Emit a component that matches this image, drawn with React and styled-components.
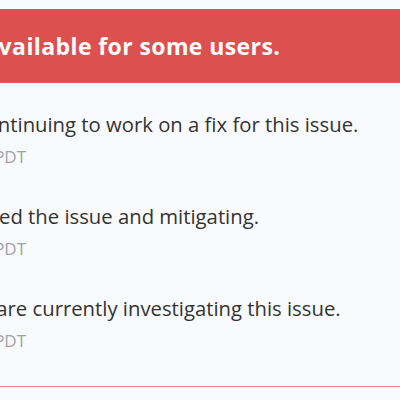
import React from 'react';
import styled, { createGlobalStyle } from 'styled-components';

const GlobalStyle = createGlobalStyle`
  html, body {
    margin: 0;
    background: #f9fafb;
  }
  body {
    font-family: "Open Sans", "Noto Sans", sans-serif;
    overflow: hidden;
  }
`;

const updates = [
  {
    label: 'Update',
    body: 'Team is continuing to work on a fix for this issue.',
    time: 'Jun 4, 10:22 PDT',
  },
  {
    label: 'Identified',
    body: 'We identified the issue and mitigating.',
    time: 'Jun 4, 09:41 PDT',
  },
  {
    label: 'Investigating',
    body: 'Engineers are currently investigating this issue.',
    time: 'Jun 4, 09:05 PDT',
  },
];

const IncidentPage = () => {
  return (
    <Wrapper>
      <GlobalStyle />
      <Card>
        <Header>
          <h2>API service is unavailable for some users.</h2>
        </Header>
        <UpdateList>
          {updates.map((update, index) => {
            const { label, body, time } = update;
            return (
              <UpdateRow key={index}>
                <Label>{label}</Label>
                <div>
                  <Body>{body}</Body>
                  <Time>{time}</Time>
                </div>
              </UpdateRow>
            );
          })}
        </UpdateList>
      </Card>
    </Wrapper>
  );
};
export default IncidentPage;

// the page is scrolled: the left part of the card lies off screen
const Wrapper = styled.div`
  width: 720px;
  margin-left: -252px;
  padding-top: 9px;
`;

const Card = styled.div`
  border-bottom: 1px solid #dd8a8a;
`;

const Header = styled.div`
  background: #dd5050;
  border-top: 1px solid #cf5757;
  border-bottom: 1px solid #d66060;
  padding: 0 20px 0 44px;
  height: 72px;
  display: flex;
  align-items: center;
  h2 {
    margin: 0;
    color: #fff;
    font-size: 23px;
    font-weight: 700;
    letter-spacing: 0.4px;
    white-space: nowrap;
  }
`;

const UpdateList = styled.div`
  padding: 10px 20px 17px;
`;

const UpdateRow = styled.div`
  display: grid;
  grid-template-columns: 130px 1fr;
  padding: 17px 0 17px;
`;

const Label = styled.strong`
  font-size: 20px;
  line-height: 28px;
  color: #333;
`;

const Body = styled.p`
  margin: 0;
  font-size: 20.3px;
  line-height: 28px;
  color: #333;
  white-space: nowrap;
`;

const Time = styled.small`
  display: block;
  margin-top: 7px;
  font-size: 17px;
  line-height: 23px;
  color: #a3a3a3;
  white-space: nowrap;
`;
